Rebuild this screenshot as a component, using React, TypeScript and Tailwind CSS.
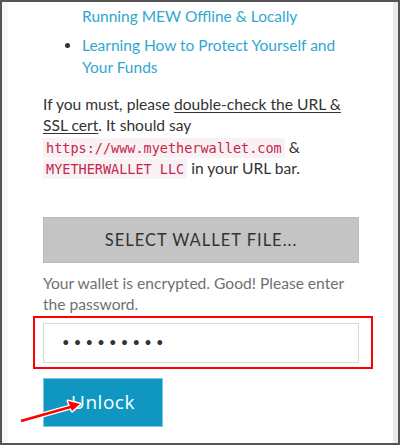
export default function App() {
  return (
    <div className="w-[400px] h-[445px] overflow-hidden border-2 border-[#555] bg-white flex" style={{ fontFamily: "Lato, 'Liberation Sans', sans-serif" }}>
      {/* left gutter */}
      <div className="w-[6px] shrink-0 bg-[#f7f7f7]" />

      <div className="relative flex-1 pl-[35px] pr-[34px] pt-[3px]">
        {/* list */}
        <ul className="pl-[39px] text-[15.5px] leading-[22px] text-[#2fa7d0]">
          <li className="list-none">Running MEW Offline &amp; Locally</li>
          <li className="mt-[7px] list-disc marker:text-[#333]">
            Learning How to Protect Yourself and Your Funds
          </li>
        </ul>

        {/* url warning */}
        <p className="mt-[16px] text-[15.6px] leading-[21.3px] text-[#333]">
          If you must, please <span className="underline underline-offset-2">double-check the URL &amp; SSL cert</span>. It should say{" "}
          <code className="bg-[#f9f2f4] px-[3px] py-[2px] text-[13.5px] leading-[16px] text-[#c7254e]" style={{ fontFamily: "'DejaVu Sans Mono', monospace" }}>
            https://www.myetherwallet.com
          </code>{" "}
          &amp;{" "}
          <code className="bg-[#f9f2f4] px-[3px] py-[2px] text-[13.5px] leading-[16px] text-[#c7254e]" style={{ fontFamily: "'DejaVu Sans Mono', monospace" }}>
            MYETHERWALLET LLC
          </code>{" "}
          in your URL bar.
        </p>

        {/* select file */}
        <button className="mt-[38px] w-full h-[46px] bg-[#c4c4c4] border border-[#bbb] text-[16.5px] tracking-[1px] text-[#333] flex items-center justify-center">
          SELECT WALLET FILE...
        </button>

        {/* helper */}
        <p className="mt-[10px] text-[15.6px] leading-[21px] text-[#707070]">
          Your wallet is encrypted. Good! Please enter the password.
        </p>

        {/* password */}
        <div className="relative mt-[8px]">
          <div className="h-[40px] border border-[#c8e6c2] flex items-center pl-[18px] text-[13px] tracking-[4.2px] text-[#333]">
            •••••••••
          </div>
          <div className="absolute -left-[10px] -right-[14px] -top-[7px] -bottom-[6px] border-2 border-[#f00]" />
        </div>

        {/* unlock */}
        <button className="mt-[15px] w-[120px] h-[49px] bg-[#0f97c1] border border-[#7cc7df] text-white text-[19px] tracking-[0.5px] flex items-center justify-center" style={{ fontFamily: "'Open Sans', 'DejaVu Sans', sans-serif" }}>
          Unlock
        </button>

        {/* annotation arrow */}
        <svg className="absolute left-0 top-0 pointer-events-none" width="120" height="445" viewBox="0 0 120 445">
          <g transform="translate(-8 -2)">
            <path d="M21 421 L74 406" stroke="#fff" strokeWidth="5" strokeLinecap="round" />
            <path d="M80 404 L68 401 L72 411 Z" fill="#fff" stroke="#fff" strokeWidth="3" strokeLinejoin="round" />
            <path d="M21 421 L74 406" stroke="#f00" strokeWidth="2.5" />
            <path d="M80 404 L68 401 L72 411 Z" fill="#f00" />
          </g>
        </svg>
      </div>

      {/* right scrollbar strip */}
      <div className="w-[5px] shrink-0 bg-[#ebebeb]" />
    </div>
  );
}
